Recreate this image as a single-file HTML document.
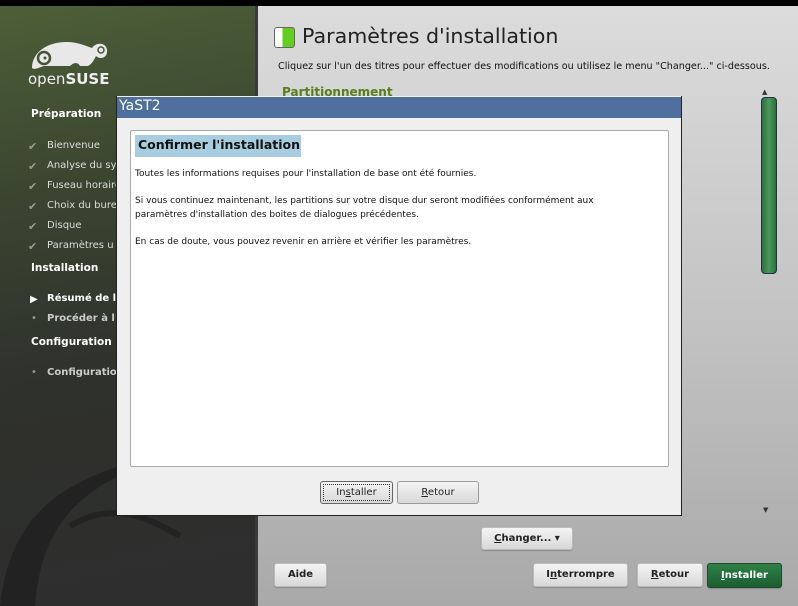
<!DOCTYPE html>
<html><head><meta charset="utf-8"><style>
*{margin:0;padding:0;box-sizing:border-box}
body{width:798px;height:606px;overflow:hidden;background:#000;font-family:"DejaVu Sans","Liberation Sans",sans-serif;position:relative}
.abs{position:absolute;white-space:nowrap}
#side{left:0;top:6px;width:255px;height:600px;background:linear-gradient(170deg,#4d5f38 0%,#3a4530 30%,#2f312c 60%,#2e2e2e 100%)}
#main{left:258px;top:6px;width:540px;height:600px;background:linear-gradient(180deg,#dcdcdc 0%,#c4c4c4 50%,#a9a9a9 100%)}
#sep{left:255px;top:6px;width:3px;height:600px;background:#3a3a3a}
.s{color:#ddd;font-size:10px;position:absolute;left:47px;white-space:nowrap}
.h{color:#fff;font-size:10.5px;font-weight:bold;position:absolute;left:31px}
.chk{position:absolute;left:28px;color:#9a9a9a;font-size:11px}
.btn{position:absolute;border:1px solid #999;border-radius:3px;background:linear-gradient(#f4f4f4,#d8d8d8);font-size:10px;text-align:center;color:#222;white-space:nowrap}
.bb{font-weight:bold;box-shadow:0 1px 1px rgba(0,0,0,.2)}
</style></head><body>
<div id="side" class="abs">
<svg class="abs" style="left:30px;top:30px" width="80" height="40" viewBox="0 0 80 40">
<path d="M2 32 C2 16 18 6 36 6 C48 6 56 10 62 12 C66 6 76 6 77 14 C78 22 70 24 66 20 C64 24 62 28 58 30 L50 30 C48 26 44 26 40 30 L14 30 C8 32 4 34 2 32Z" fill="#e8e8e8"/>
<circle cx="14" cy="22" r="6" fill="none" stroke="#46553a" stroke-width="2.5"/>
<circle cx="15" cy="22" r="1.5" fill="#46553a"/>
<circle cx="71" cy="14" r="3" fill="none" stroke="#46553a" stroke-width="1.5"/>
</svg>
<div class="abs" style="left:28px;top:64px;color:#eee;font-size:15px">open<b>SUSE</b></div>
<div class="h" style="top:102px">Préparation</div>
<div class="chk" style="top:134px">✔</div><div class="s" style="top:134px">Bienvenue</div>
<div class="chk" style="top:154px">✔</div><div class="s" style="top:154px">Analyse du sys</div>
<div class="chk" style="top:174px">✔</div><div class="s" style="top:174px">Fuseau horaire</div>
<div class="chk" style="top:194px">✔</div><div class="s" style="top:194px">Choix du bure</div>
<div class="chk" style="top:214px">✔</div><div class="s" style="top:214px">Disque</div>
<div class="chk" style="top:234px">✔</div><div class="s" style="top:234px">Paramètres u</div>
<div class="h" style="top:256px">Installation</div>
<div class="abs" style="left:30px;top:288px;color:#fff;font-size:10px">▶</div><div class="s" style="top:287px;color:#fff;font-weight:bold">Résumé de l</div>
<div class="abs" style="left:31px;top:307px;color:#999;font-size:10px">•</div><div class="s" style="top:307px;color:#ccc;font-weight:bold">Procéder à l'</div>
<div class="h" style="top:330px">Configuration</div>
<div class="abs" style="left:31px;top:361px;color:#999;font-size:10px">•</div><div class="s" style="top:361px;color:#ccc;font-weight:bold">Configuratio</div>
<svg class="abs" style="left:0;top:370px" width="255" height="230"><path d="M0 230 C10 140 60 110 120 90 L118 100 C60 130 40 170 35 230Z" fill="#222"/><path d="M70 150 C120 120 160 150 180 160" stroke="#232323" stroke-width="6" fill="none"/></svg>
</div>
<div id="sep" class="abs"></div>
<div id="main" class="abs"></div>
<div class="abs" style="left:274px;top:27px;width:21px;height:21px;border:1px solid #666;border-radius:3px;background:linear-gradient(90deg,#fff 40%,#6c2 40%)"></div>
<div class="abs" style="left:302px;top:24px;font-size:20.6px;color:#222">Paramètres d'installation</div>
<div class="abs" style="left:278px;top:61px;font-size:9.6px;color:#111">Cliquez sur l'un des titres pour effectuer des modifications ou utilisez le menu "Changer..." ci-dessous.</div>
<div class="abs" style="left:282px;top:85px;font-size:12px;font-weight:bold;color:#5a7d1e">Partitionnement</div>
<div class="abs" style="left:762px;top:88px;font-size:7px;color:#333">▲</div>
<div class="abs" style="left:761px;top:97px;width:16px;height:177px;border:1px solid #234;border-radius:4px;background:linear-gradient(90deg,#2f6d3f,#4a9a5a,#2f6d3f)"></div>
<div class="abs" style="left:763px;top:506px;font-size:7px;color:#333">▼</div>
<div class="abs" style="left:116px;top:96px;width:566px;height:420px;background:#efefef;border:1px solid #222;border-top:none"></div>
<div class="abs" style="left:117px;top:97px;width:564px;height:21px;background:#4f6f9f;color:#fff;font-size:14px;padding:1px 2px">YaST2</div>
<div class="abs" style="left:130px;top:130px;width:539px;height:337px;background:#fff;border:1px solid #aaa;border-radius:2px"></div>
<div class="abs" style="left:135px;top:135px;width:166px;height:22px;background:#a9cde0;font-size:12.5px;font-weight:bold;color:#111;padding:2px 3px">Confirmer l'installation</div>
<div class="abs" style="left:135px;top:168px;font-size:9px;color:#111;line-height:13.5px">Toutes les informations requises pour l'installation de base ont été fournies.<br><br>Si vous continuez maintenant, les partitions sur votre disque dur seront modifiées conformément aux<br>paramètres d'installation des boites de dialogues précédentes.<br><br>En cas de doute, vous pouvez revenir en arrière et vérifier les paramètres.</div>
<div class="btn" style="left:320px;top:481px;width:73px;height:23px;line-height:21px;border-color:#666;outline:1px dotted #333;outline-offset:-4px">In<u>s</u>taller</div>
<div class="btn" style="left:397px;top:481px;width:82px;height:23px;line-height:21px"><u>R</u>etour</div>
<div class="btn bb" style="left:481px;top:527px;width:92px;height:23px;line-height:21px;border-color:#bbb"><u>C</u>hanger... ▾</div>
<div class="btn bb" style="left:274px;top:563px;width:53px;height:24px;line-height:22px;border-color:#bbb">Aide</div>
<div class="btn bb" style="left:533px;top:563px;width:95px;height:24px;line-height:22px;border-color:#bbb">I<u>n</u>terrompre</div>
<div class="btn bb" style="left:637px;top:563px;width:66px;height:24px;line-height:22px;border-color:#bbb"><u>R</u>etour</div>
<div class="btn bb" style="left:707px;top:563px;width:75px;height:25px;line-height:23px;border-color:#1d4a2a;background:linear-gradient(#2f8048,#1b5e30);color:#fff"><u>I</u>nstaller</div>
</body></html>
